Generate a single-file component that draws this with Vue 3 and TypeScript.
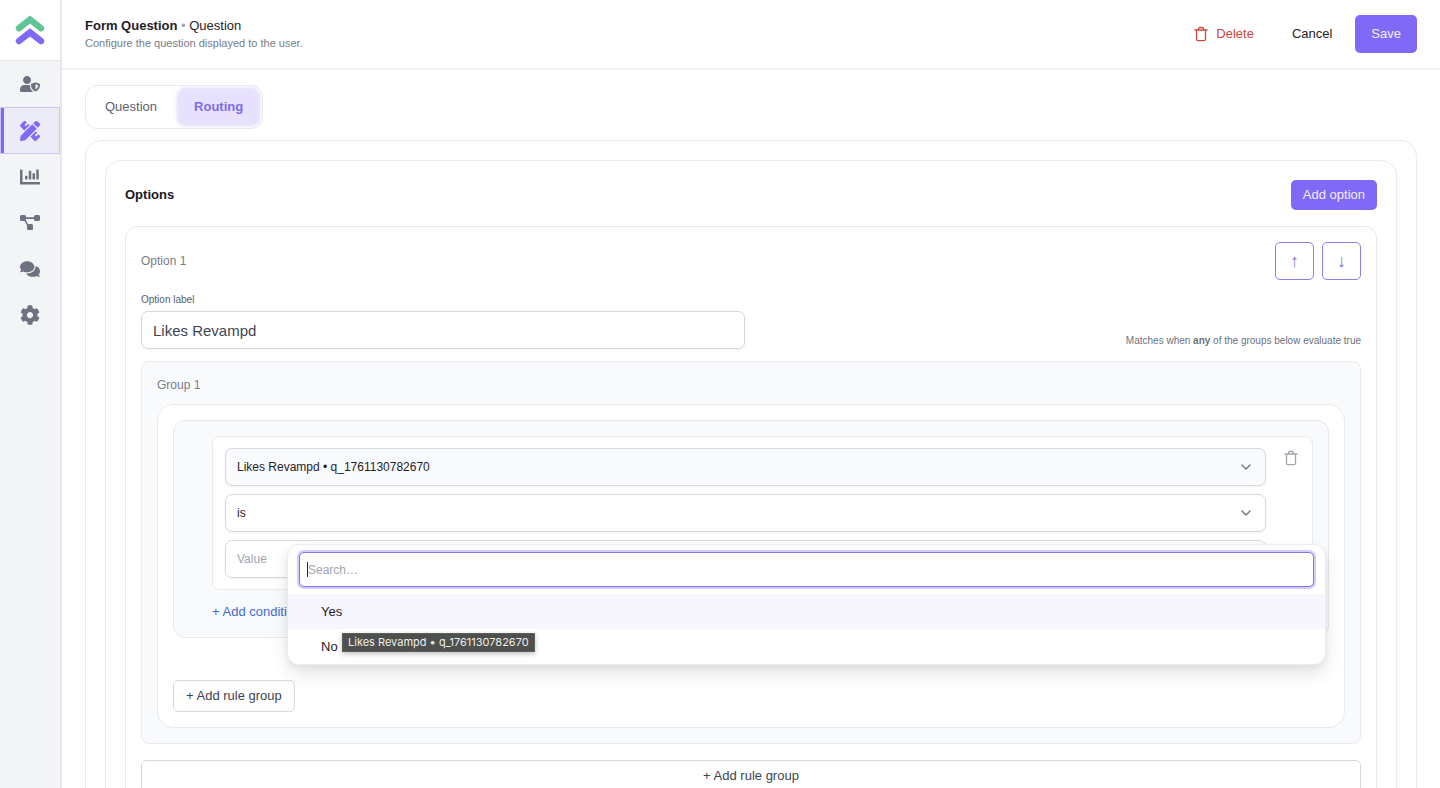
<script setup lang="ts">
import { ref } from 'vue'

interface NavItem {
  label: string
  viewBox: string
  path: string
}

const navItems: NavItem[] = [
  {
    label: 'Admin',
    viewBox: '0 0 640 512',
    path: 'M622.3 251.1l-115.2-45c-4.1-1.6-12.6-3.7-22.2 0l-115.2 45c-10.7 4.2-17.7 14-17.7 24.9 0 111.6 68.7 188.8 132.9 213.9 9.6 3.7 18 1.6 22.2 0C558.4 469.9 640 400.5 640 276c0-10.9-7-20.7-17.7-24.9zM496 432.4V263.3l85.5 33.3c-5.6 77.1-50.9 119.4-85.5 135.8zM224 256c70.7 0 128-57.3 128-128S294.7 0 224 0 96 57.3 96 128s57.3 128 128 128zm96 40c0-2.5.8-4.8 1.1-7.2-2.5-.1-4.9-.8-7.5-.8H134.4C60.2 288 0 348.2 0 422.4V464c0 26.5 21.5 48 48 48h352c6.8 0 13.3-1.5 19.2-4-54-42.9-99.2-116.7-99.2-212z',
  },
  {
    label: 'Design',
    viewBox: '0 0 512 512',
    path: 'M109.46 244.04l134.58-134.56-36-36-46 46a24 24 0 0 1-34-34l46-46-30.18-30.18C131.47-3.1 111.39-3.1 99 9.29L9.29 99c-12.38 12.39-12.39 32.47 0 44.86l100.17 100.18zm388.47-116.8c18.76-18.76 18.75-49.17 0-67.93l-45.25-45.25c-18.76-18.76-49.18-18.76-67.95 0l-46.02 46.01 113.2 113.2 46.02-46.03zM316.08 82.71l-297 296.96L.32 487.11c-2.53 14.49 10.09 27.11 24.59 24.56l107.45-18.84L429.28 195.9 316.08 82.71zm186.63 285.43l-30.18-30.18-46 46a24 24 0 0 1-34-34l46-46-36-36L267.93 402.5l100.21 100.2c12.39 12.39 32.47 12.39 44.86 0l89.71-89.7c12.39-12.39 12.39-32.47 0-44.86z',
  },
  {
    label: 'Reports',
    viewBox: '0 0 512 512',
    path: 'M332.8 320h38.4c6.4 0 12.8-6.4 12.8-12.8V172.8c0-6.4-6.4-12.8-12.8-12.8h-38.4c-6.4 0-12.8 6.4-12.8 12.8v134.4c0 6.4 6.4 12.8 12.8 12.8zm96 0h38.4c6.4 0 12.8-6.4 12.8-12.8V76.8c0-6.4-6.4-12.8-12.8-12.8h-38.4c-6.4 0-12.8 6.4-12.8 12.8v230.4c0 6.4 6.4 12.8 12.8 12.8zm-288 0h38.4c6.4 0 12.8-6.4 12.8-12.8v-70.4c0-6.4-6.4-12.8-12.8-12.8h-38.4c-6.4 0-12.8 6.4-12.8 12.8v70.4c0 6.4 6.4 12.8 12.8 12.8zm96 0h38.4c6.4 0 12.8-6.4 12.8-12.8V108.8c0-6.4-6.4-12.8-12.8-12.8h-38.4c-6.4 0-12.8 6.4-12.8 12.8v198.4c0 6.4 6.4 12.8 12.8 12.8zM496 384H64V80c0-8.84-7.16-16-16-16H16C7.16 64 0 71.16 0 80v336c0 17.67 14.33 32 32 32h464c8.84 0 16-7.16 16-16v-32c0-8.84-7.16-16-16-16z',
  },
  {
    label: 'Workflows',
    viewBox: '0 0 640 512',
    path: 'M48 0h96q48 0 48 48v24h256V48q0-48 48-48h96q48 0 48 48v96q0 48-48 48h-96q-48 0-48-48v-16H192v16l-6 22 72 126q16-4 30-4h80q48 0 48 48v96q0 48-48 48h-96q-48 0-48-48v-96l-78-144H48q-48 0-48-48V48Q0 0 48 0z',
  },
  {
    label: 'Messages',
    viewBox: '0 0 576 512',
    path: 'M416 192c0-88.4-93.1-160-208-160S0 103.6 0 192c0 34.3 14.1 65.9 38 92-13.4 30.2-35.5 54.2-35.8 54.5-2.2 2.3-2.8 5.7-1.5 8.7S4.8 352 8 352c36.6 0 66.9-12.3 88.7-25 32.2 15.7 70.3 25 111.3 25 114.9 0 208-71.6 208-160zm122 220c23.9-26 38-57.7 38-92 0-66.9-53.5-124.2-129.3-148.1.9 6.6 1.3 13.3 1.3 20.1 0 105.9-107.7 192-240 192-10.8 0-21.3-.8-31.7-1.9C207.8 439.6 281.8 480 368 480c41 0 79.1-9.2 111.3-25 21.8 12.7 52.1 25 88.7 25 3.2 0 6.1-1.9 7.3-4.8 1.3-2.9.7-6.3-1.5-8.7-.3-.3-22.4-24.2-35.8-54.5z',
  },
  {
    label: 'Settings',
    viewBox: '0 0 512 512',
    path: 'M487.4 315.7l-42.6-24.6c4.3-23.2 4.3-47 0-70.2l42.6-24.6c4.9-2.8 7.1-8.6 5.5-14-11.1-35.6-30-67.8-54.7-94.6-3.8-4.1-10-5.1-14.8-2.3L380.8 110c-17.9-15.4-38.5-27.3-60.8-35.1V25.8c0-5.6-3.9-10.5-9.4-11.7-36.7-8.2-74.3-7.8-109.2 0-5.5 1.2-9.4 6.1-9.4 11.7V75c-22.2 7.9-42.8 19.8-60.8 35.1L88.7 85.5c-4.9-2.8-11-1.9-14.8 2.3-24.7 26.7-43.6 58.9-54.7 94.6-1.7 5.4.6 11.2 5.5 14L67.3 221c-4.3 23.2-4.3 47 0 70.2l-42.6 24.6c-4.9 2.8-7.1 8.6-5.5 14 11.1 35.6 30 67.8 54.7 94.6 3.8 4.1 10 5.1 14.8 2.3l42.6-24.6c17.9 15.4 38.5 27.3 60.8 35.1v49.2c0 5.6 3.9 10.5 9.4 11.7 36.7 8.2 74.3 7.8 109.2 0 5.5-1.2 9.4-6.1 9.4-11.7v-49.2c22.2-7.9 42.8-19.8 60.8-35.1l42.6 24.6c4.9 2.8 11 1.9 14.8-2.3 24.7-26.7 43.6-58.9 54.7-94.6 1.5-5.5-.7-11.3-5.6-14.1zM256 336c-44.1 0-80-35.9-80-80s35.9-80 80-80 80 35.9 80 80-35.9 80-80 80z',
  },
]

const activeNav = ref('Design')
const activeTab = ref('Routing')
const tabs: string[] = ['Question', 'Routing']
const optionLabel = ref('Likes Revampd')
const search = ref('')
const choices: string[] = ['Yes', 'No']
const highlighted = ref('Yes')
</script>

<template>
  <div class="app">
    <aside class="sidebar">
      <a class="brand" href="#" aria-label="Home">
        <svg width="30" height="30" viewBox="0 0 30 30" fill="none" stroke-width="6.4" stroke-linecap="round" stroke-linejoin="miter">
          <path d="M4 13.2L15 4.6l11 8.6" stroke="#5fc496" />
          <path d="M4 26L15 17.4 26 26" stroke="#7f69f6" />
        </svg>
      </a>
      <nav class="nav">
        <a
          v-for="item in navItems"
          :key="item.label"
          href="#"
          class="nav-item"
          :class="{ active: item.label === activeNav }"
          :aria-label="item.label"
          @click.prevent="activeNav = item.label"
        >
          <svg width="20" height="20" :viewBox="item.viewBox" fill="currentColor"><path :d="item.path" /></svg>
        </a>
      </nav>
    </aside>

    <div class="page">
      <header class="header">
        <div>
          <h1 class="title"><strong>Form Question</strong> <span class="dot">•</span> Question</h1>
          <p class="subtitle">Configure the question displayed to the user.</p>
        </div>
        <div class="actions">
          <button type="button" class="delete">
            <svg width="14" height="16" viewBox="0 0 14 16" fill="none" stroke="currentColor" stroke-width="1.3" stroke-linecap="round" stroke-linejoin="round">
              <path d="M1 4h12M4.3 4l.5-1.8Q5 1.5 5.8 1.5h2.4q.8 0 1 .7L9.7 4M2.5 4v9q0 1.6 1.6 1.6h5.8q1.6 0 1.6-1.6V4" />
            </svg>
            Delete
          </button>
          <button type="button" class="cancel">Cancel</button>
          <button type="button" class="primary save">Save</button>
        </div>
      </header>

      <main class="main">
        <div class="tabs" role="tablist">
          <button
            v-for="tab in tabs"
            :key="tab"
            type="button"
            role="tab"
            class="tab"
            :class="{ selected: tab === activeTab }"
            :aria-selected="tab === activeTab"
            @click="activeTab = tab"
          >
            {{ tab }}
          </button>
        </div>

        <section class="panel outer">
          <section class="panel options">
            <div class="row">
              <h2 class="heading">Options</h2>
              <button type="button" class="primary add-option">Add option</button>
            </div>

            <article class="option-card">
              <div class="row">
                <span class="muted">Option 1</span>
                <div class="movers">
                  <button type="button" class="move" aria-label="Move up">↑</button>
                  <button type="button" class="move" aria-label="Move down">↓</button>
                </div>
              </div>

              <div class="label-row">
                <div class="field">
                  <label for="option-label">Option label</label>
                  <input id="option-label" v-model="optionLabel" type="text" />
                </div>
                <p class="hint">Matches when <strong>any</strong> of the groups below evaluate true</p>
              </div>

              <div class="group">
                <span class="muted">Group 1</span>
                <div class="group-body">
                  <div class="rules">
                    <div class="condition">
                      <div class="selects">
                        <div class="select-wrap">
                          <select class="filled" aria-label="Question">
                            <option>Likes Revampd • q_1761130782670</option>
                          </select>
                          <svg class="chevron" width="10" height="6" viewBox="0 0 10 6" fill="none" stroke="currentColor" stroke-width="1.5" stroke-linecap="round" stroke-linejoin="round"><path d="M1 1l4 4 4-4" /></svg>
                        </div>
                        <div class="select-wrap">
                          <select aria-label="Operator">
                            <option>is</option>
                          </select>
                          <svg class="chevron" width="10" height="6" viewBox="0 0 10 6" fill="none" stroke="currentColor" stroke-width="1.5" stroke-linecap="round" stroke-linejoin="round"><path d="M1 1l4 4 4-4" /></svg>
                        </div>
                        <div class="select-wrap">
                          <select class="empty" aria-label="Value">
                            <option>Value</option>
                          </select>
                          <div class="popup">
                            <div class="search">
                              <input v-model="search" type="text" placeholder="Search…" aria-label="Search" />
                              <span class="caret"></span>
                            </div>
                            <ul class="choices" role="listbox" aria-label="Values">
                              <li
                                v-for="choice in choices"
                                :key="choice"
                                role="option"
                                class="choice"
                                :class="{ highlighted: choice === highlighted }"
                                :aria-selected="choice === highlighted"
                                @mouseenter="highlighted = choice"
                              >
                                {{ choice }}
                              </li>
                            </ul>
                            <div class="tooltip" role="tooltip">Likes Revampd • q_1761130782670</div>
                          </div>
                        </div>
                      </div>
                      <button type="button" class="trash" aria-label="Delete condition">
                        <svg width="14" height="16" viewBox="0 0 14 16" fill="none" stroke="currentColor" stroke-width="1.3" stroke-linecap="round" stroke-linejoin="round">
                          <path d="M1 4h12M4.3 4l.5-1.8Q5 1.5 5.8 1.5h2.4q.8 0 1 .7L9.7 4M2.5 4v9q0 1.6 1.6 1.6h5.8q1.6 0 1.6-1.6V4" />
                        </svg>
                      </button>
                    </div>
                    <button type="button" class="add-condition">+ Add condition</button>
                  </div>
                  <button type="button" class="add-group">+ Add rule group</button>
                </div>
              </div>

              <button type="button" class="add-group wide">+ Add rule group</button>
            </article>
          </section>
        </section>
      </main>
    </div>
  </div>
</template>

<style>
html {
  scrollbar-width: none;
}

body {
  background: #fff;
}
</style>

<style scoped>
.app,
.app * {
  box-sizing: border-box;
}

.app {
  display: flex;
  min-height: 100vh;
  font-family: 'Liberation Sans', Arial, sans-serif;
  font-size: 13px;
  line-height: 18px;
  color: #1f2127;
}

button,
input,
select {
  margin: 0;
  font: inherit;
  color: inherit;
}

button {
  display: inline-flex;
  align-items: center;
  justify-content: center;
  padding: 0;
  border: 0;
  background: none;
  cursor: pointer;
}

h1,
h2,
p,
ul {
  margin: 0;
  padding: 0;
}

.sidebar {
  position: sticky;
  top: 0;
  flex: none;
  width: 62px;
  height: 100vh;
  background: #f3f4f6;
  border-right: 2px solid #e5e7eb;
}

.brand {
  display: flex;
  align-items: center;
  justify-content: center;
  height: 61px;
  background: #fff;
  border-bottom: 1px solid #e8e9ec;
}

.nav {
  display: flex;
  flex-direction: column;
}

.nav-item {
  display: flex;
  align-items: center;
  justify-content: center;
  height: 46px;
  color: #6d7280;
}

.nav-item.active {
  height: 47px;
  color: #7f69f6;
  background: #ebebf6;
  border: 1px solid #cdc5f5;
  box-shadow: inset 3px 0 #7f69f6;
}

.page {
  flex: 1;
  min-width: 0;
}

.header {
  display: flex;
  align-items: center;
  justify-content: space-between;
  height: 70px;
  padding: 0 23px;
  border-bottom: 2px solid #f0f1f3;
}

.title {
  font-size: 13px;
  font-weight: 400;
  line-height: 18px;
}

.dot {
  color: #a3a7b0;
}

.subtitle {
  font-size: 11px;
  line-height: 16px;
  color: #777c87;
}

.actions {
  display: flex;
  align-items: center;
}

.delete {
  gap: 8px;
  margin-right: 38px;
  color: #cf4540;
}

.cancel {
  margin-right: 23px;
}

.primary {
  color: #f3f0ff;
  background: #7f69f6;
  border-radius: 5px;
}

.save {
  height: 38px;
  padding: 0 16px;
}

.main {
  padding: 15px 23px 24px;
}

.tabs {
  display: inline-flex;
  gap: 3px;
  padding: 2px;
  border: 1px solid #e9eaed;
  border-radius: 12px;
  vertical-align: top;
}

.tab {
  height: 38px;
  padding: 0 17px;
  border-radius: 9px;
  color: #5a606c;
}

.tab.selected {
  font-weight: 700;
  color: #806be8;
  background: #e7e1fd;
  box-shadow: 0 0 4px #e0d9fb, inset 0 0 4px #f1edfe;
}

.panel {
  padding: 19px;
  border: 1px solid #ebecee;
  border-radius: 16px;
}

.outer {
  margin-top: 11px;
}

.row {
  display: flex;
  align-items: center;
  justify-content: space-between;
}

.heading {
  font-size: 13px;
  line-height: 18px;
  color: #16181d;
}

.add-option {
  height: 30px;
  padding: 0 12px;
}

.option-card {
  margin-top: 16px;
  padding: 15px;
  border: 1px solid #e9eaed;
  border-radius: 12px;
}

.muted {
  display: block;
  font-size: 12px;
  line-height: 16px;
  color: #777c87;
}

.movers {
  display: flex;
  gap: 8px;
}

.move {
  width: 39px;
  height: 38px;
  border: 1px solid #8f7fe0;
  border-radius: 5px;
  font-size: 18px;
  color: #8674e4;
}

.label-row {
  display: flex;
  align-items: flex-end;
  justify-content: space-between;
  margin-top: 12px;
}

.field {
  display: flex;
  flex-direction: column;
  gap: 4px;
  width: 50%;
  padding-right: 6px;
}

.field label {
  font-size: 10px;
  line-height: 15px;
  color: #555b67;
}

.field input {
  width: 100%;
  height: 38px;
  padding: 0 11px;
  border: 1px solid #d5d8dd;
  border-radius: 7px;
  outline: none;
  font-size: 15px;
  color: #3d4452;
  background: #fff;
  box-shadow: 0 1px 2px #0000000d;
}

.hint {
  font-size: 10px;
  line-height: 16px;
  color: #6b717d;
}

.group {
  margin-top: 12px;
  padding: 15px;
  border: 1px solid #e9ebee;
  border-radius: 8px;
  background: #f9fafc;
}

.group-body {
  margin-top: 11px;
  padding: 15px;
  border: 1px solid #e9ebee;
  border-radius: 16px;
  background: #fff;
}

.rules {
  padding: 15px 15px 16px 38px;
  border: 1px solid #e6e8ec;
  border-radius: 12px;
  background: #f9fafc;
}

.condition {
  display: flex;
  padding: 11px 12px;
  border: 1px solid #e9ebee;
  border-radius: 8px;
  background: #fff;
}

.selects {
  display: flex;
  flex: 1;
  flex-direction: column;
  gap: 8px;
  min-width: 0;
}

.select-wrap {
  position: relative;
}

.select-wrap select {
  display: block;
  width: 100%;
  height: 38px;
  padding: 0 32px 0 11px;
  appearance: none;
  border: 1px solid #d5d8dd;
  border-radius: 7px;
  font-size: 12px;
  color: #1f2127;
  background: #fff;
  box-shadow: 0 1px 2px #0000000d;
}

.select-wrap select.filled {
  background: #f9fafb;
}

.select-wrap select.empty {
  color: #a0a5b0;
}

.chevron {
  position: absolute;
  top: 16px;
  right: 15px;
  color: #747984;
  pointer-events: none;
}

.trash {
  align-self: flex-start;
  width: 34px;
  height: 20px;
  margin-left: 8px;
  margin-right: -8px;
  color: #a0a5af;
}

.add-condition {
  height: 18px;
  margin-top: 13px;
  color: #426bcd;
}

.add-group {
  height: 32px;
  margin-top: 42px;
  padding: 0 12px;
  border: 1px solid #d5d8dd;
  border-radius: 5px;
  color: #3d4452;
  background: #fff;
}

.add-group.wide {
  width: 100%;
  margin-top: 16px;
}

.popup {
  position: absolute;
  top: 4px;
  left: 62px;
  right: -60px;
  z-index: 2;
  border: 1px solid #ececef;
  border-radius: 12px;
  background: #fff;
  box-shadow: 0 9px 18px #0000001a, 0 3px 6px #0000000d;
}

.search {
  position: relative;
  padding: 7px 11px;
}

.search input {
  display: block;
  width: 100%;
  height: 35px;
  padding: 0 8px;
  border: 1px solid #8873e8;
  border-radius: 5px;
  outline: none;
  font-size: 12px;
  background: #fff;
  box-shadow: 0 0 0 2px #d6ccfb;
}

.search input::placeholder {
  color: #a0a5b0;
  opacity: 1;
}

.caret {
  position: absolute;
  top: 17px;
  left: 19px;
  width: 1px;
  height: 15px;
  background: #22252b;
}

.choices {
  list-style: none;
}

.choice {
  padding: 9px 33px 8px;
}

.choice.highlighted {
  background: #f7f5fe;
}

.tooltip {
  position: absolute;
  top: 88px;
  left: 54px;
  padding: 0 5px;
  border: 1px solid #5d5f5c;
  background: #4e504d;
  box-shadow: 0 2px 5px #00000040;
  font-family: Inter, sans-serif;
  font-size: 11px;
  line-height: 17px;
  color: #eeeeec;
  white-space: nowrap;
}
</style>
